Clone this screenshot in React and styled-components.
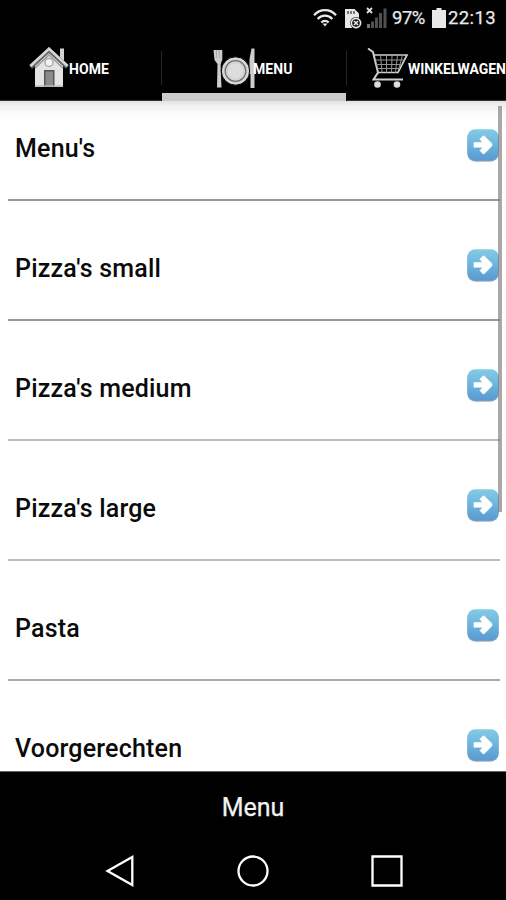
import React from "react";
import styled, { createGlobalStyle } from "styled-components";

const Global = createGlobalStyle`
  * { box-sizing: border-box; }
  body { margin: 0; background: #000; font-family: Roboto, "Liberation Sans", sans-serif; }
  svg { display: block; flex: none; }
`;

const Screen = styled.div`
  width: 506px;
  height: 900px;
  overflow: hidden;
  display: flex;
  flex-direction: column;
  background: #000;
`;

const StatusBar = styled.header`
  flex: none;
  height: 36px;
  padding-right: 9px;
  display: flex;
  align-items: center;
  justify-content: flex-end;
  color: #e8e8e8;
`;

const StatusText = styled.span`
  width: ${(p) => p.$width}px;
  font-size: 18.5px;
  line-height: 36px;
  white-space: nowrap;
  letter-spacing: ${(p) => p.$spacing}px;
  -webkit-text-stroke: 0.25px #e8e8e8;
`;

const Tabs = styled.nav`
  flex: none;
  height: 65px;
  display: flex;
`;

const Tab = styled.div`
  flex: none;
  width: ${(p) => p.$width}px;
  height: 65px;
  padding: 11px 0 0 ${(p) => p.$inset}px;
  display: flex;
  align-items: flex-start;
  border-bottom: ${(p) => (p.$active ? "8px solid #cbcbcb" : "1px solid #333")};
`;

const TabLabel = styled.span`
  margin-left: ${(p) => p.$gap}px;
  font-size: 14px;
  font-weight: 700;
  line-height: 44px;
  letter-spacing: ${(p) => p.$spacing}px;
  color: #fff;
  white-space: nowrap;
`;

const TabDivider = styled.div`
  flex: none;
  width: 1px;
  height: 34px;
  margin-top: 15px;
  background: #262626;
`;

const Content = styled.main`
  position: relative;
  flex: none;
  height: 670px;
  overflow: hidden;
  background: linear-gradient(#e2e2e2 0, #f1f1f1 5px, #fafafa 11px, #fff 18px);
`;

const List = styled.ul`
  list-style: none;
  margin: -20px 6px 0 8px;
  padding: 0;
`;

const Row = styled.li`
  height: 120px;
  padding: 48px 1px 0 7px;
  display: flex;
  align-items: flex-start;
  justify-content: space-between;
  border-bottom: 2px solid ${(p) => p.$line};
`;

const RowLabel = styled.span`
  margin-top: 4px;
  font-size: 25px;
  font-weight: 500;
  line-height: 32px;
  letter-spacing: 0.2px;
  color: #0b0b0b;
`;

const ScrollThumb = styled.div`
  position: absolute;
  top: 5px;
  right: 4px;
  width: 4px;
  height: 406px;
  background: rgba(125, 120, 120, 0.65);
`;

const Footer = styled.footer`
  flex: none;
  height: 72px;
  border-top: 1px solid #666;
  text-align: center;
  font-size: 25px;
  line-height: 72px;
  color: #f2f2f2;
  -webkit-text-stroke: 0.25px #f2f2f2;
`;

const NavBar = styled.div`
  flex: none;
  height: 57px;
  padding: 12px 103px 0 105px;
  display: flex;
  justify-content: space-between;
`;

const WifiIcon = () => (
  <svg width="24" height="20" viewBox="0 0 24 20" fill="none" stroke="#e8e8e8" strokeWidth="2.3">
    <path d="M1 7.2C7 .4 17 .4 23 7.2M4.7 11c4-4.5 10.600-4.500 14.600 0M8.300 14.500c2.200-2.300 5.200-2.300 7.400 0" />
    <path d="M9.500 15.600h5L12 18.600z" fill="#e8e8e8" stroke="none" />
  </svg>
);

const SimIcon = () => (
  <svg width="18" height="21" viewBox="0 0 18 21">
    <path d="M1 1h9.500L15 5.500V20H1z" fill="#e8e8e8" />
    <path d="M4 3v3M7 3v3M10 3v3" stroke="#555" strokeWidth="1.500" />
    <circle cx="12" cy="15" r="5.900" fill="#111" />
    <circle cx="12" cy="15" r="4.600" fill="none" stroke="#e8e8e8" strokeWidth="1.600" />
    <path d="M10 13l4 4m0-4l-4 4" stroke="#e8e8e8" strokeWidth="1.600" />
  </svg>
);

const SignalIcon = () => (
  <svg width="22" height="22" viewBox="0 0 22 22">
    <path d="M1 1l5 5m0-5L1 6" stroke="#e0e0e0" strokeWidth="1.800" />
    <path d="M1 17h3v4H1z" fill="#777" />
    <path d="M5 14.500h3V21H5zM9 10.500h3V21H9zM13 6h3v15h-3zM17.500 1.500h3V21h-3z" fill="#505050" />
  </svg>
);

const BatteryIcon = () => (
  <svg width="14" height="20" viewBox="0 0 14 20">
    <path d="M4.500 0h5v2H14v18H0V2h4.500z" fill="#e8e8e8" />
  </svg>
);

const HomeIcon = () => (
  <svg width="40" height="42" viewBox="0 0 40 42">
    <path d="M31 1.500h4V17h-4z" fill="#d4d4d4" />
    <path d="M6 18L20 5l14 13v22H6z" fill="#e4e4e4" />
    <path d="M6 21L20 8l14 13" fill="none" stroke="#999" strokeWidth="1.500" />
    <path d="M1.500 20L20 3l18.500 17" fill="none" stroke="#666" strokeWidth="4.500" />
    <path d="M1.500 19L20 1.800 38.500 19" fill="none" stroke="#d6d6d6" strokeWidth="2.600" />
    <circle cx="20" cy="15.500" r="4" fill="#f4f4f4" stroke="#aaa" strokeWidth="1.500" />
    <path d="M15 23h10.500v17H15z" fill="#555" />
    <path d="M16.500 24.500h7.500V40h-7.500z" fill="#8b8b8b" />
    <path d="M6 39h28" stroke="#bbb" strokeWidth="1.500" />
  </svg>
);

const PlateIcon = () => (
  <svg width="42" height="42" viewBox="0 0 42 42">
    <path d="M.5 3h8.800v9.500L7.700 17v6l.8 17.500H4L4.500 17 1.500 13z" fill="#cecece" />
    <path d="M3.500 3v8M6.300 3v8" stroke="#a0a0a0" strokeWidth=".7" />
    <path d="M38.500 1.500h3V41H37.500V27h-1V12z" fill="#cecece" />
    <circle cx="22.500" cy="24" r="14.200" fill="#d6d6d6" stroke="#000" strokeWidth="1" />
    <circle cx="22.500" cy="24" r="10.300" fill="#ddd" stroke="#707070" strokeWidth="1.300" />
    <circle cx="22.500" cy="24" r="8.300" fill="none" stroke="#c6c6c6" strokeWidth=".8" />
  </svg>
);

const CartIcon = () => (
  <svg width="42" height="42" viewBox="0 0 42 42" fill="none" stroke="#d0d0d0">
    <path d="M1 1.500l5 3.500 5 20.500-4.500 7H36" strokeWidth="2" />
    <path d="M6.500 8h33.500l-9 17.500H10.500" strokeWidth="1.700" />
    <path d="M8 13h29.500M9 17.500h26M10 21.500h23M13.500 8l1.500 17.500M19.500 8v17.500M25 8l-.5 17.500M30.500 8l-2 17.500M35.500 8l-4 15" strokeWidth="1" stroke="#929292" />
    <circle cx="10.500" cy="37.500" r="3.300" fill="#ddd" stroke="none" />
    <circle cx="30" cy="37.500" r="3.300" fill="#ddd" stroke="none" />
  </svg>
);

const ArrowIcon = () => (
  <svg width="32" height="33" viewBox="0 0 32 33">
    <defs>
      <linearGradient id="arrowFill" x1="0" y1="0" x2="0" y2="1">
        <stop offset="0" stopColor="#84cbe6" />
        <stop offset=".55" stopColor="#6bb1dd" />
        <stop offset="1" stopColor="#5b99d0" />
      </linearGradient>
    </defs>
    <rect x=".3" y="1" width="31.400" height="31.700" rx="8" fill="#a8b2ba" />
    <rect x=".3" y=".2" width="31.400" height="31.600" rx="8" fill="url(#arrowFill)" />
    <path d="M7 13.500h8.700l-2.700-3.200L15.800 7h1.500L25 14.700v2.100l-7.700 7.900h-1.500L13 21.500l2.700-3.300H7z" fill="#fff" stroke="#fff" strokeWidth=".6" strokeLinejoin="round" />
  </svg>
);

const BackIcon = () => (
  <svg width="30" height="32" viewBox="0 0 30 32">
    <path d="M2.500 16L27.300 2v28z" fill="none" stroke="#fff" strokeWidth="2.300" />
  </svg>
);

const CircleIcon = () => (
  <svg width="32" height="32" viewBox="0 0 32 32">
    <circle cx="16" cy="16" r="14.500" fill="none" stroke="#fff" strokeWidth="2.300" />
  </svg>
);

const SquareIcon = () => (
  <svg width="32" height="32" viewBox="0 0 32 32">
    <path d="M1.500 1.500h29v29h-29z" fill="none" stroke="#fff" strokeWidth="2.300" />
  </svg>
);

const StatusIcons = styled.div`
  display: flex;
  align-items: center;
  gap: 6px;
  margin-right: 4px;
`;

const SimSlot = styled.div`
  margin: 0 -2px 0 1px;
`;

const BatterySlot = styled.div`
  margin-right: 2px;
`;

const items = [
  { label: "Menu's", line: "#999" },
  { label: "Pizza's small", line: "#999" },
  { label: "Pizza's medium", line: "#bbb" },
  { label: "Pizza's large", line: "#bbb" },
  { label: "Pasta", line: "#aaa" },
  { label: "Voorgerechten", line: "#999" },
];

export default function App() {
  return (
    <Screen>
      <Global />
      <StatusBar>
        <StatusIcons>
          <WifiIcon />
          <SimSlot><SimIcon /></SimSlot>
          <SignalIcon />
        </StatusIcons>
        <StatusText $width={40} $spacing={-0.5}>97%</StatusText>
        <BatterySlot><BatteryIcon /></BatterySlot>
        <StatusText $width={49} $spacing={0.4}>22:13</StatusText>
      </StatusBar>
      <Tabs>
        <Tab $width={161} $inset={29}>
          <HomeIcon />
          <TabLabel $gap={0} $spacing={0.05}>HOME</TabLabel>
        </Tab>
        <TabDivider />
        <Tab $width={184} $inset={51} $active>
          <PlateIcon />
          <TabLabel $gap={-2} $spacing={0.05}>MENU</TabLabel>
        </Tab>
        <TabDivider />
        <Tab $width={184} $inset={20}>
          <CartIcon />
          <TabLabel $gap={-1} $spacing={-0.05}>WINKELWAGEN</TabLabel>
        </Tab>
      </Tabs>
      <Content>
        <List>
          {items.map((item) => (
            <Row key={item.label} $line={item.line}>
              <RowLabel>{item.label}</RowLabel>
              <ArrowIcon />
            </Row>
          ))}
        </List>
        <ScrollThumb />
      </Content>
      <Footer>Menu</Footer>
      <NavBar>
        <BackIcon />
        <CircleIcon />
        <SquareIcon />
      </NavBar>
    </Screen>
  );
}
